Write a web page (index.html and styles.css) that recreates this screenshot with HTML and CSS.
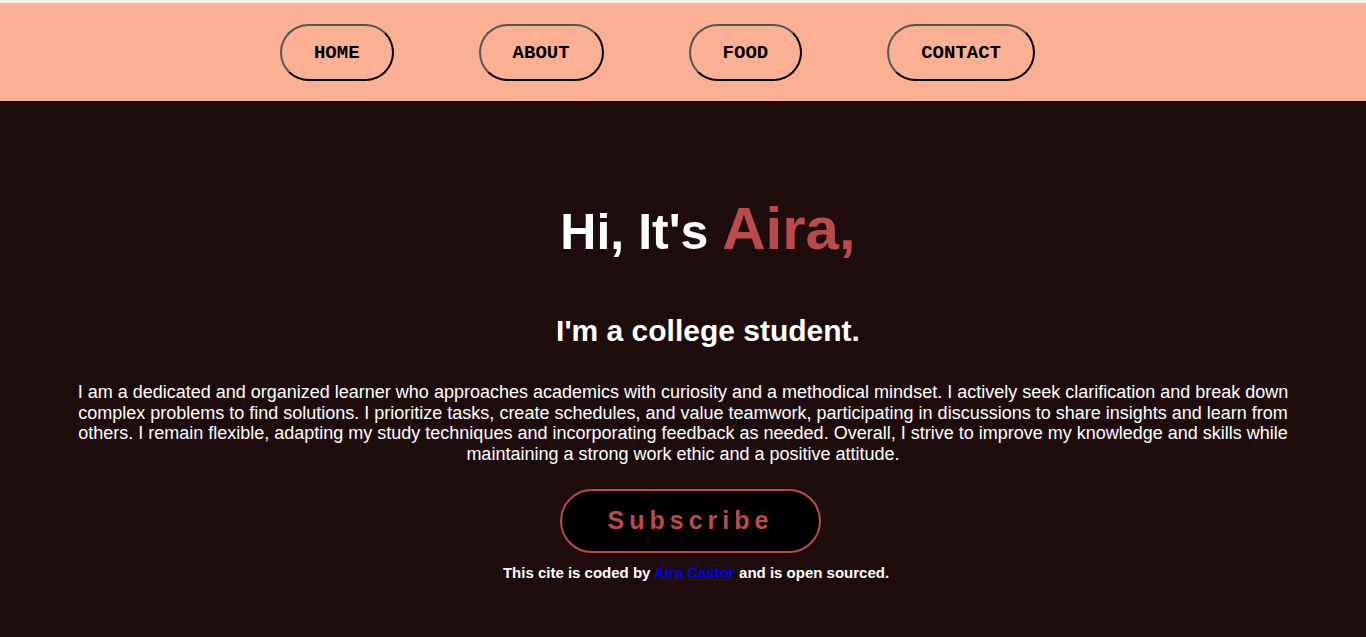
FILE: index.html
```html
<!DOCTYPE html>
<html lang="en">
<head>
<meta charset="utf-8">
<title>Aira</title>
<link rel="stylesheet" href="styles.css">
</head>
<body>
<header class="top">
  <nav class="nav">
    <a class="nav-btn" href="#">HOME</a>
    <a class="nav-btn" href="#">ABOUT</a>
    <a class="nav-btn" href="#">FOOD</a>
    <a class="nav-btn" href="#">CONTACT</a>
  </nav>
</header>
<main class="hero">
  <h1 class="title">Hi, It's <span class="name">Aira,</span></h1>
  <h2 class="subtitle">I'm a college student.</h2>
  <p class="bio">I am a dedicated and organized learner who approaches academics with curiosity and a methodical mindset. I actively seek clarification and break down complex problems to find solutions. I prioritize tasks, create schedules, and value teamwork, participating in discussions to share insights and learn from others. I remain flexible, adapting my study techniques and incorporating feedback as needed. Overall, I strive to improve my knowledge and skills while maintaining a strong work ethic and a positive attitude.</p>
  <button class="subscribe" type="button">Subscribe</button>
  <p class="credit">This cite is coded by <a href="#">Aira Castor</a> and is open sourced.</p>
</main>
</body>
</html>
```

FILE: styles.css
```css
html, body {
  margin: 0;
  padding: 0;
}
body {
  background: #1e0c0d;
  font-family: "Liberation Sans", Arial, sans-serif;
  color: #ffffff;
  border-top: 3px solid #fcefe8;
}
.top {
  background: #fbb094;
  padding: 21px 0 20px;
}
.nav {
  display: flex;
  justify-content: center;
  gap: 85px;
  padding-right: 51px;
}
.nav-btn {
  box-sizing: border-box;
  height: 57px;
  display: flex;
  align-items: center;
  padding: 0 32px;
  border: 2px solid;
  border-color: #555555 #000000 #000000 #555555;
  border-radius: 30px;
  font-family: "Liberation Mono", "Courier New", monospace;
  font-weight: bold;
  font-size: 19px;
  color: #000000;
  text-decoration: none;
}
.hero {
  display: flex;
  flex-direction: column;
  align-items: center;
  text-align: center;
  padding: 0 70px;
}
.title {
  margin: 93px 0 0;
  padding-left: 50px;
  font-size: 50px;
  line-height: 70px;
  font-weight: bold;
}
.name {
  color: #b94b4d;
  font-size: 60px;
}
.subtitle {
  margin: 47px 0 0;
  padding-left: 50px;
  font-size: 30px;
  line-height: 34px;
  font-weight: bold;
}
.bio {
  margin: 34px 0 0;
  font-size: 18px;
  line-height: 20.7px;
}
.subscribe {
  margin: 24px 0 0 15px;
  box-sizing: border-box;
  width: 261px;
  height: 64px;
  background: #000000;
  border: 2px solid #b94b4d;
  border-radius: 32px;
  color: #b94b4d;
  font-family: "Liberation Sans", Arial, sans-serif;
  font-weight: bold;
  font-size: 25px;
  letter-spacing: 5px;
  padding: 0;
}
.credit {
  margin: 11px 0 0;
  padding-left: 26px;
  font-size: 15px;
  font-weight: bold;
}
.credit a {
  color: #0000ee;
}
```
